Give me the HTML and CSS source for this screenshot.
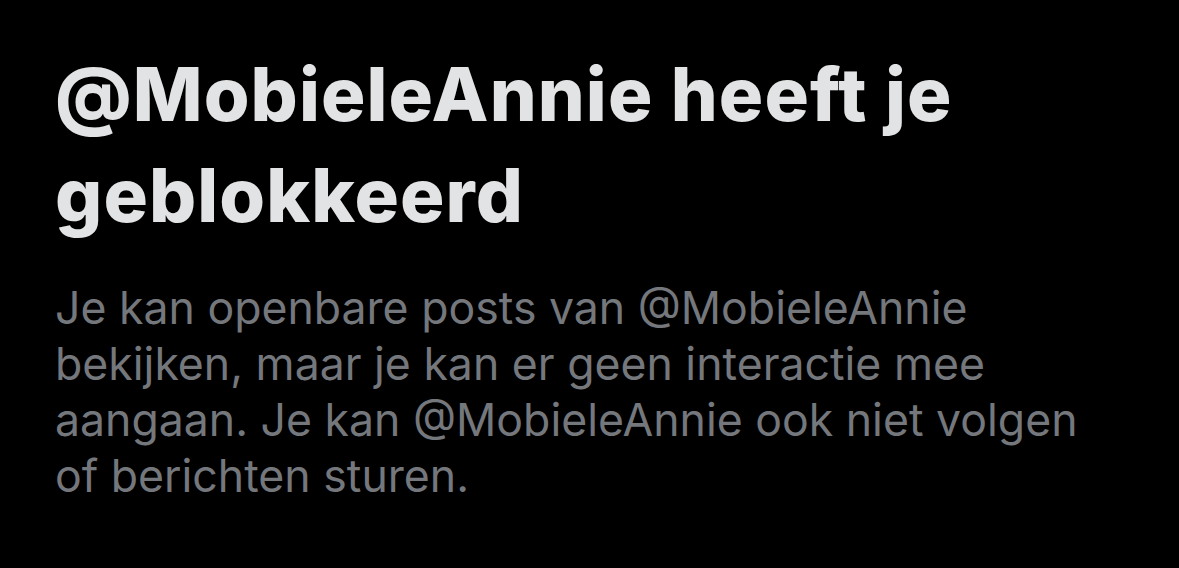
FILE: index.html
```html
<!DOCTYPE html>
<html lang="nl">
<head>
    <meta charset="UTF-8">
    <meta name="viewport" content="width=device-width, initial-scale=1.0">
    <title>Geblokkeerd</title>
    <link rel="stylesheet" href="styles.css">
</head>
<body>

    <div class="blocked">
        <h1 class="blocked-title">@MobieleAnnie heeft je geblokkeerd</h1>
        <p class="blocked-text">Je kan openbare posts van @MobieleAnnie bekijken, maar je kan er geen interactie mee aangaan. Je kan @MobieleAnnie ook niet volgen of berichten sturen.</p>
    </div>

</body>
</html>
```
FILE: styles.css
```css
body {
    margin: 0;
    background-color: #000;
    font-family: Inter, "Liberation Sans", sans-serif;
}

.blocked {
    padding: 44px 0 0 55px;
    width: 1040px;
}

.blocked-title {
    margin: 0;
    font-size: 74px;
    font-weight: 800;
    line-height: 101px;
    letter-spacing: 1.1px;
    color: #e2e3e4;
    width: 930px;
}

.blocked-text {
    margin: 34px 0 0;
    font-size: 44.6px;
    font-weight: 400;
    line-height: 56px;
    color: #74777c;
}
```
